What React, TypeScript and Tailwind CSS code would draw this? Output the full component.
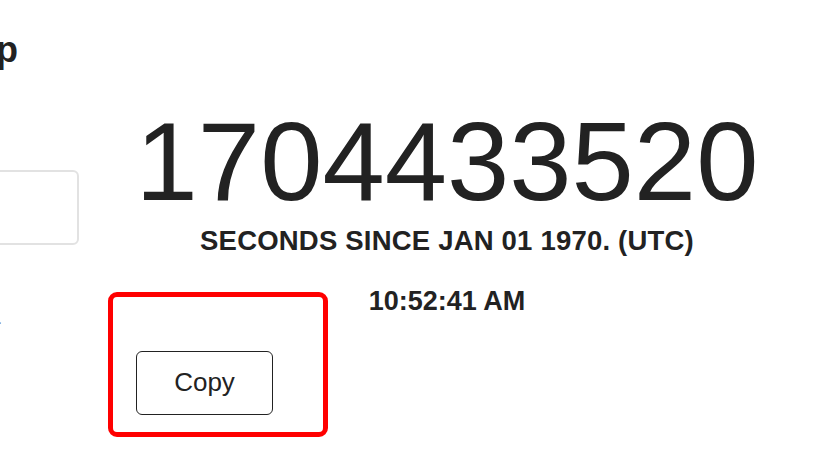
import React from "react";

const App = () => {
  return (
    <div
      className="flex w-[815px] h-[451px] overflow-hidden bg-white text-[#222]"
      style={{ fontFamily: '"Liberation Sans", Arial, sans-serif' }}
    >
      {/* left column, mostly scrolled out of view */}
      <div className="w-[79px] shrink-0 overflow-hidden pt-[32px]">
        <div className="flex justify-end pr-[61px]">
          <h2 className="whitespace-nowrap text-[36px] leading-none font-bold">Timestamp</h2>
        </div>
        <div className="mt-[102px] ml-[-40px] h-[75px] rounded-md border-2 border-[#e2e2e2]" />
        <div className="mt-[66px] flex justify-end pr-[77px]">
          <span className="whitespace-nowrap text-[16px] leading-none text-[#777]">Your local time.</span>
        </div>
      </div>

      {/* main column */}
      <div className="relative flex-1 pt-[106px]">
        <div className="text-center text-[112px] leading-none">1704433520</div>
        <div className="mt-[9px] text-center text-[27.5px] leading-none font-bold tracking-[0.2px]">
          SECONDS SINCE JAN 01 1970. (UTC)
        </div>
        <div className="mt-[33px] text-center text-[27px] leading-none font-bold">10:52:41 AM</div>
        <button className="mt-[36px] ml-[57px] h-[64px] w-[137px] rounded-md border border-[#222] bg-white text-[26px] text-[#222]">
          Copy
        </button>
        <div className="absolute left-[29px] top-[292px] h-[145px] w-[220px] rounded-[9px] border-[5px] border-[#ff0000]" />
      </div>
    </div>
  );
};

export default App;
